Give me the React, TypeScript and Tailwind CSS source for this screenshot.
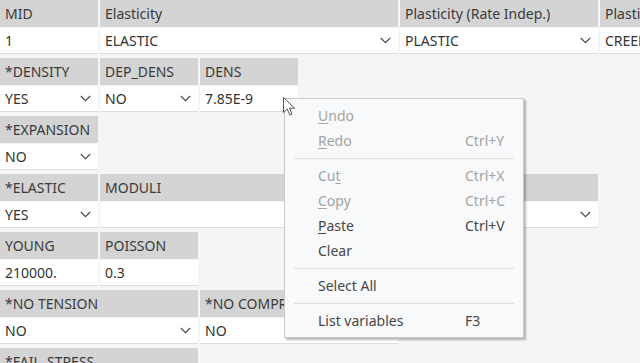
import React from "react";

const font = { fontFamily: '"Noto Sans", "Liberation Sans", sans-serif' };

function Chevron() {
  return (
    <svg width="11" height="7" viewBox="0 0 11 7" className="shrink-0">
      <polyline points="0.8,1 5.5,5.6 10.2,1" fill="none" stroke="#4a4a4a" strokeWidth="1.2" />
    </svg>
  );
}

type F = { w: number; label: string; value?: string; dd?: boolean; noInput?: boolean };

function Field({ w, label, value = "", dd, noInput }: F) {
  return (
    <div className="flex flex-col shrink-0" style={{ width: w }}>
      <div className="h-[27px] bg-[#d4d4d4] text-[#3a3a3a] text-[14px] pl-[5px] flex items-center whitespace-nowrap overflow-hidden">
        {label}
      </div>
      {!noInput && (
        <div className="mt-px h-[26px] bg-white border-b border-[#dcdcdc] text-[#333] text-[14px] pl-[5px] pr-[7px] flex items-center justify-between whitespace-nowrap overflow-hidden">
          <span>{value}</span>
          {dd && <Chevron />}
        </div>
      )}
    </div>
  );
}

function Row({ fields }: { fields: F[] }) {
  return (
    <div className="flex gap-[2px] mb-[4px]">
      {fields.map((f, i) => (
        <Field key={i} {...f} />
      ))}
    </div>
  );
}

function Item({
  label,
  u,
  shortcut,
  disabled,
}: {
  label: string;
  u?: number;
  shortcut?: string;
  disabled?: boolean;
}) {
  const c = disabled ? "text-[#a3a3a3]" : "text-[#474747]";
  return (
    <div className={`h-[25px] flex items-center text-[14px] ${c}`}>
      <span className="pl-[33px] w-[180px] whitespace-nowrap">
        {u === undefined ? (
          label
        ) : (
          <>
            {label.slice(0, u)}
            <span className="underline underline-offset-2">{label[u]}</span>
            {label.slice(u + 1)}
          </>
        )}
      </span>
      <span className="whitespace-nowrap">{shortcut}</span>
    </div>
  );
}

function Sep() {
  return <div className="h-[10px] flex items-center px-[9px]"><div className="h-px w-full bg-[#dedede]" /></div>;
}

export default function App() {
  return (
    <div className="relative w-[640px] h-[363px] bg-[#f4f5f7] overflow-hidden" style={font}>
      <div className="flex flex-col">
        <Row
          fields={[
            { w: 98, label: "MID", value: "1" },
            { w: 298, label: "Elasticity", value: "ELASTIC", dd: true },
            { w: 198, label: "Plasticity (Rate Indep.)", value: "PLASTIC", dd: true },
            { w: 198, label: "Plasticity (Rate Dep.)", value: "CREEP", dd: true },
          ]}
        />
        <Row
          fields={[
            { w: 98, label: "*DENSITY", value: "YES", dd: true },
            { w: 98, label: "DEP_DENS", value: "NO", dd: true },
            { w: 98, label: "DENS", value: "7.85E-9" },
          ]}
        />
        <Row fields={[{ w: 98, label: "*EXPANSION", value: "NO", dd: true }]} />
        <Row
          fields={[
            { w: 98, label: "*ELASTIC", value: "YES", dd: true },
            { w: 498, label: "MODULI", value: "", dd: true },
          ]}
        />
        <Row
          fields={[
            { w: 98, label: "YOUNG", value: "210000." },
            { w: 98, label: "POISSON", value: "0.3" },
          ]}
        />
        <Row
          fields={[
            { w: 198, label: "*NO TENSION", value: "NO", dd: true },
            { w: 198, label: "*NO COMPRESSION", value: "NO", dd: true },
          ]}
        />
        <Row fields={[{ w: 198, label: "*FAIL_STRESS", value: "", dd: true }]} />
      </div>

      <div className="absolute left-[284px] top-[98px] w-[240px] bg-[#f8f9fa] border border-[#c9c9c9] py-[4px] shadow-[2px_2px_2px_rgba(0,0,0,0.28)]">
        <Item label="Undo" u={0} disabled />
        <Item label="Redo" u={0} shortcut="Ctrl+Y" disabled />
        <Sep />
        <Item label="Cut" u={2} shortcut="Ctrl+X" disabled />
        <Item label="Copy" u={0} shortcut="Ctrl+C" disabled />
        <Item label="Paste" u={0} shortcut="Ctrl+V" />
        <Item label="Clear" />
        <Sep />
        <Item label="Select All" />
        <Sep />
        <Item label="List variables" shortcut="F3" />
      </div>

      <svg className="absolute left-[283px] top-[97px]" width="14" height="20" viewBox="0 0 14 20">
        <path d="M0.5,0.5 L0.5,15.5 L4.2,12 L6.8,18 L9,17 L6.5,11.2 L11.5,11.2 Z" fill="#fff" stroke="#555" strokeWidth="1" strokeLinejoin="round" />
      </svg>
    </div>
  );
}
